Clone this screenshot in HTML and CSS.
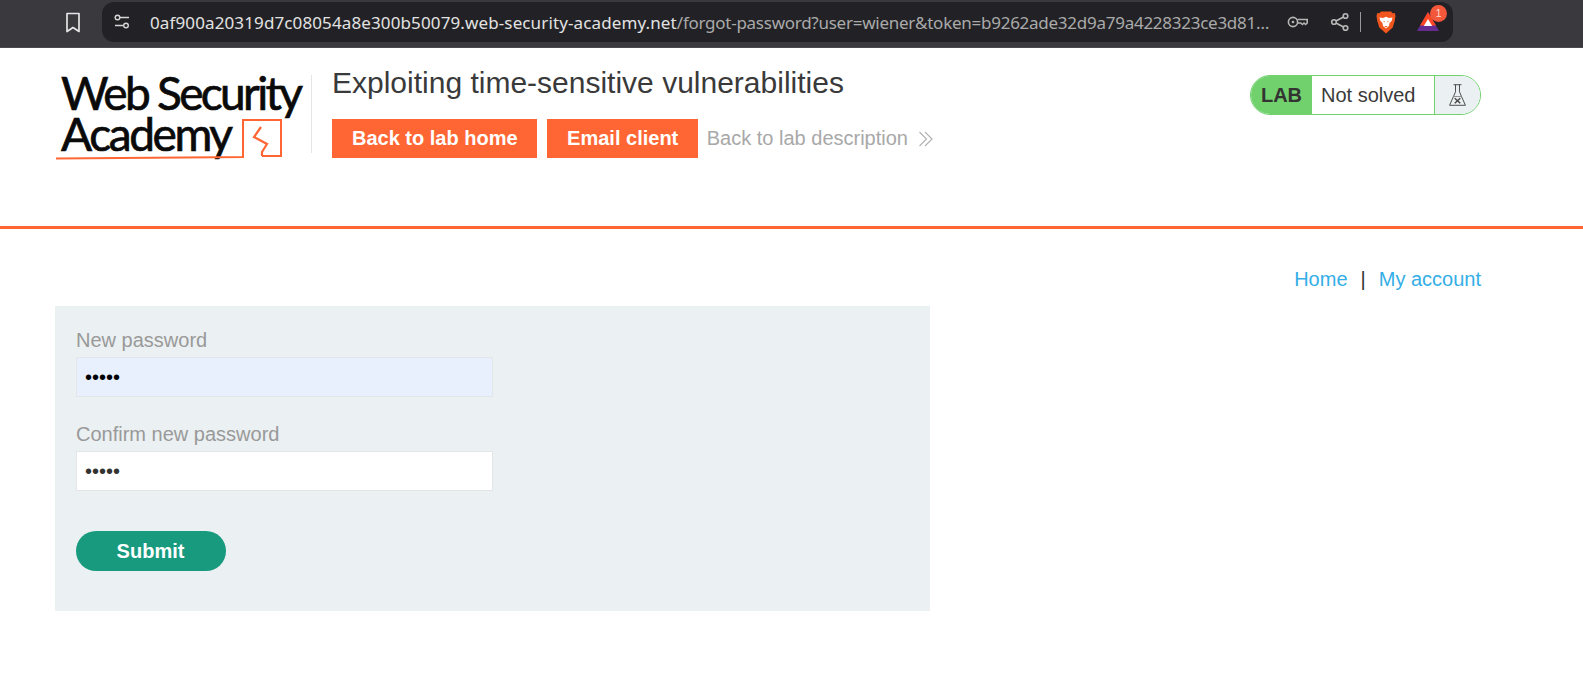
FILE: index.html
```html
<!DOCTYPE html>
<html lang="en">
<head>
<meta charset="utf-8">
<title>Exploiting time-sensitive vulnerabilities</title>
<link rel="stylesheet" href="styles.css">
</head>
<body>
<div class="chrome">
  <svg class="bookmark" width="18" height="24" viewBox="0 0 18 24"><path d="M3 3.5h12v18l-6-4-6 4z" fill="none" stroke="#e6e6e6" stroke-width="1.7" stroke-linejoin="round"/></svg>
  <div class="omnibox">
    <svg class="tune" width="18" height="18" viewBox="0 0 18 18" fill="none" stroke="#d5d5d5" stroke-width="1.4"><circle cx="4.5" cy="4.5" r="2.3"/><path d="M7 4.5h9M2 12.5h8"/><circle cx="13" cy="12.5" r="2.3"/></svg>
    <div class="url"><span class="host">0af900a20319d7c08054a8e300b50079.web-security-academy.net</span><span class="path">/forgot-password?user=wiener&amp;token=b9262ade32d9a79a4228323ce3d81…</span></div>
    <svg class="key" width="22" height="14" viewBox="0 0 22 14" fill="none" stroke="#b5b5b5" stroke-width="1.6"><circle cx="6" cy="7" r="4.6"/><circle cx="6" cy="7" r="1.3" fill="#b5b5b5" stroke="none"/><path d="M10.600 4.500h9.600v3.500l-1.600 1.500-1.600-1.500-1.600 1.500-1.600-1.500h-3"/></svg>
    <svg class="share" width="20" height="20" viewBox="0 0 20 20" fill="none" stroke="#b8b8b8" stroke-width="1.6"><circle cx="15.500" cy="4" r="2.300"/><circle cx="4" cy="10" r="2.300"/><circle cx="15.500" cy="16" r="2.300"/><path d="M6 9l7.500-4M6 11l7.500 4"/></svg>
    <span class="sep"></span>
    <svg class="brave" width="20" height="23" viewBox="0 0 20 23"><path d="M5 .5h10l1.500 1.800 2.200-.3.800 3-.8 5-2 6.500-6.700 6-6.700-6-2-6.500-.8-5 .8-3 2.200.3z" fill="#f1561f"/><path d="M3.500 6.500l3.500.5 3-1.300 3 1.300 3.500-.5-.8 3.200-2.200 2.300-.5 3-3 2.500-3-2.500-.5-3-2.200-2.300z" fill="#fff"/><path d="M7 9.500l2 1.200-.6.900zM13 9.500l-2 1.200.6.900zM8.300 15h3.400L10 16.400z" fill="#f1561f"/></svg>
    <div class="bat">
      <svg width="22" height="19" viewBox="0 0 22 19"><path d="M11 0l11 19H0z" fill="#662d91"/><path d="M11 0l8 13.500H3z" fill="#ff4724"/><path d="M11 7l4.200 7H6.800z" fill="#fff"/></svg>
      <span class="badge">1</span>
    </div>
  </div>
</div>

<header class="lab-header">
  <svg class="logo" width="256" height="92" viewBox="0 0 256 92">
    <text class="logo-text" x="6" y="35" textLength="242">Web Security</text>
    <text class="logo-text" x="6" y="76" textLength="172">Academy</text>
    <path d="M1 83.500c50-.5 120-1 187-1.500V45h38v36h-19" fill="none" stroke="#ff6633" stroke-width="2"/>
    <path d="M206 52l-7 10 13 7-5 8v4" fill="none" stroke="#ff6633" stroke-width="2.200"/>
  </svg>
  <span class="logo-rule"></span>
  <div class="header-main">
    <h1 class="lab-title">Exploiting time-sensitive vulnerabilities</h1>
    <nav class="lab-nav">
      <a class="btn-orange" href="#">Back to lab home</a>
      <a class="btn-orange" href="#">Email client</a>
      <a class="back-link" href="#">Back to lab description
        <svg class="chev" width="16" height="18" viewBox="0 0 16 18" fill="none" stroke="#b3b3b3" stroke-width="1.200"><path d="M1.500 2l7 7-7 7M7 2l7 7-7 7"/></svg>
      </a>
    </nav>
  </div>
  <div class="status">
    <span class="status-lab">LAB</span>
    <span class="status-text">Not solved</span>
    <span class="status-icon">
      <svg width="19" height="24" viewBox="0 0 24 30" fill="none" stroke="#444" stroke-width="1.200"><path d="M7 2h10M9.500 2v9L2 28h20l-7.500-17V2"/><path d="M6.500 17h11" stroke="#888"/><path d="M8.500 19l7 6.500M15.500 19l-7 6.500" stroke-width="1.800"/></svg>
    </span>
  </div>
</header>

<main class="content">
  <nav class="account-nav"><a href="#">Home</a><span class="pipe">|</span><a href="#">My account</a></nav>
  <form class="panel">
    <label class="field-label" for="pw1">New password</label>
    <input class="field autofilled" id="pw1" type="password" value="peter">
    <label class="field-label" for="pw2">Confirm new password</label>
    <input class="field" id="pw2" type="password" value="peter">
    <button class="submit" type="button">Submit</button>
  </form>
</main>
</body>
</html>
```

FILE: styles.css
```css
* { box-sizing: border-box; }
html, body { margin: 0; padding: 0; }
body { background: #fff; font-family: "Liberation Sans", Arial, sans-serif; color: #333332; overflow: hidden; }
a { text-decoration: none; }

.chrome { height: 48px; background: #3a393e; border-bottom: 1px solid #4a4a4c; display: flex; align-items: flex-start; padding: 2px 0 0 64px; }
.bookmark { margin-top: 8px; flex: none; }
.omnibox { margin-left: 20px; width: 1351px; height: 40px; background: #222226; border-radius: 12px; display: flex; align-items: center; padding-left: 11px; }
.tune { flex: none; }
.url { margin-left: 19px; width: 1122px; font: 17px "Noto Sans", sans-serif; white-space: nowrap; overflow: hidden; }
.host { color: #e2e2e2; letter-spacing: .12px; }
.path { color: #aaa; letter-spacing: -.26px; }
.key { margin-left: 15px; flex: none; }
.share { margin-left: 21px; flex: none; }
.sep { width: 1px; height: 20px; background: #999; margin-left: 10px; flex: none; }
.brave { margin-left: 15px; flex: none; }
.bat { position: relative; margin-left: 21px; width: 22px; height: 19px; margin-top: -1px; }
.bat svg { display: block; }
.badge { position: absolute; top: -7px; left: 13px; width: 17px; height: 17px; border-radius: 50%; background: #f3583b; color: #ffd9cf; font: 11px/17px "Liberation Sans", sans-serif; text-align: center; }

.lab-header { height: 181px; border-bottom: 3px solid #ff6633; display: flex; align-items: flex-start; padding: 18px 102px 0 55px; }
.logo { flex: none; display: block; margin-top: 9px; }
.logo-text { font-family: "Lato", sans-serif; font-size: 46px; font-weight: 400; fill: #0a0a0a; stroke: #0a0a0a; stroke-width: .7px; }
.logo-rule { flex: none; width: 1px; height: 78px; background: #e5e5e5; margin-top: 9px; }
.header-main { margin-left: 20px; flex: 1; }
.lab-title { margin: 0; font-weight: 400; font-size: 30px; line-height: 34px; color: #3a3a3a; }
.lab-nav { display: flex; align-items: center; margin-top: 19px; gap: 10px; }
.btn-orange { background: #ff6633; color: #fff; font-weight: 700; font-size: 20px; line-height: 39px; height: 39px; padding: 0 19.5px 0 20px; }
.back-link { color: #a8a8a8; font-size: 20px; display: flex; align-items: center; gap: 10px; margin-left: -1px; }
.chev { flex: none; }

.status { flex: none; width: 231px; height: 40px; border: 1px solid #70d16d; border-radius: 20px; display: flex; overflow: hidden; margin-top: 9px; }
.status-lab { width: 61px; background: #70d16d; font-weight: 700; font-size: 20px; line-height: 38px; text-align: center; color: #333332; }
.status-text { flex: 1; padding-left: 9px; font-size: 20px; line-height: 38px; color: #3a3a3a; }
.status-icon { width: 46px; border-left: 1px solid #70d16d; background: #ebf0f2; display: flex; align-items: center; justify-content: center; }

.content { padding: 0 102px 0 55px; }
.account-nav { display: flex; justify-content: flex-end; align-items: center; font-size: 20px; line-height: 24px; padding-top: 23px; height: 77px; }
.account-nav a { color: #34aee6; }
.pipe { margin: 0 13px; color: #333332; }
.panel { width: 875px; height: 305px; background: #ebf0f2; padding: 23px 20px 0 21px; display: block; }
.field-label { display: block; font-size: 20px; line-height: 23px; color: #999; }
.field { display: block; width: 417px; height: 40px; margin: 5px 0 0; padding: 0 8px; border: 1px solid #e2e6e8; background: #fff; font: 20px "Liberation Sans", sans-serif; color: #333332; outline: 0; border-radius: 0; }
.autofilled { background: #e8f0fe; color: #000; margin-bottom: 26px; }
.submit { display: block; width: 150px; height: 40px; margin: 40px 0 0 -.5px; border: 0; border-radius: 20px; background: #189a7f; color: #fff; font: 700 20px "Liberation Sans", sans-serif; padding: 0; }
```
